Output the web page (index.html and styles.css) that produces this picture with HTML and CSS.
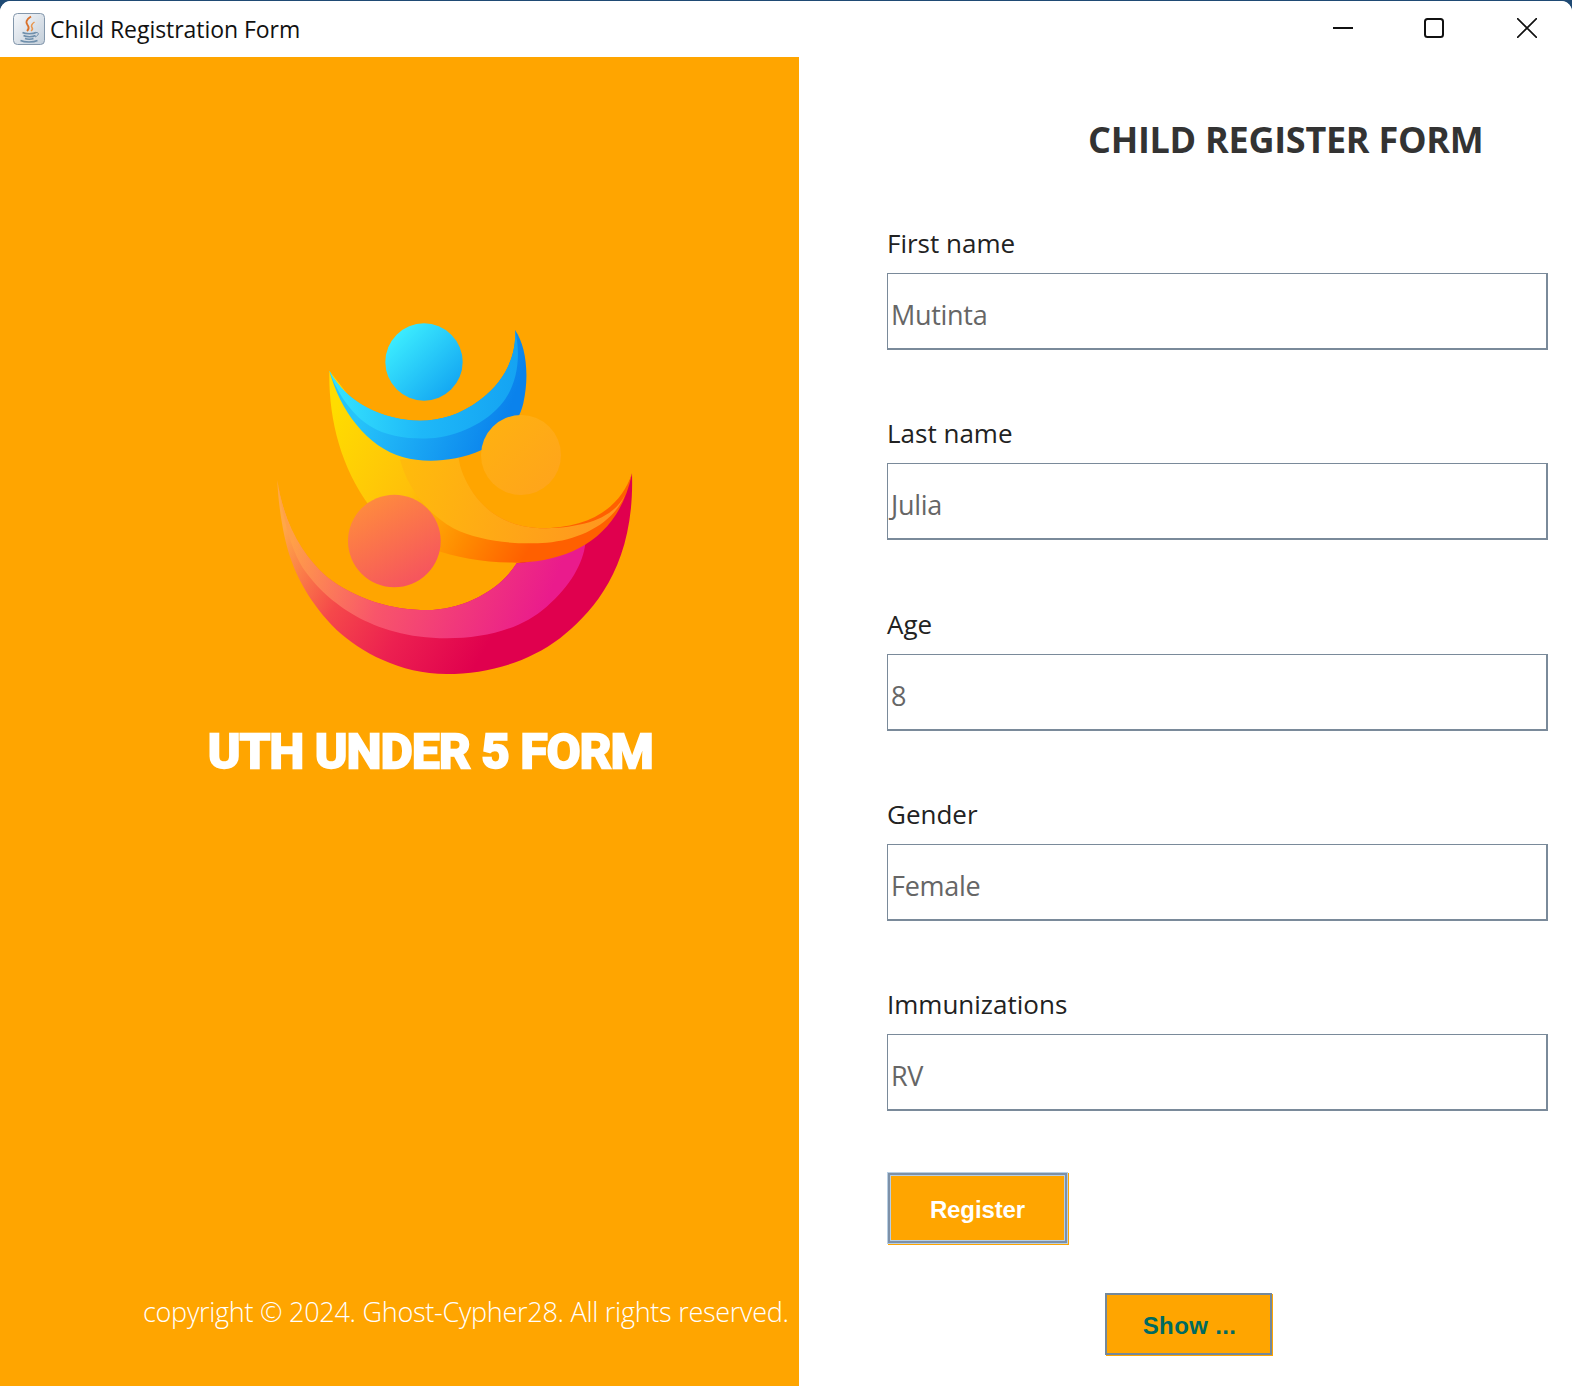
FILE: index.html
```html
<!DOCTYPE html>
<html lang="en">
<head>
<meta charset="utf-8">
<title>Child Registration Form</title>
<link rel="stylesheet" href="styles.css">
</head>
<body>
<div class="window">
  <header class="titlebar">
    <svg class="app-icon" viewBox="0 0 32 32" aria-hidden="true">
      <defs>
        <linearGradient id="iconbg" x1="0" y1="0" x2="1" y2="1">
          <stop offset="0" stop-color="#f6f8fb"/><stop offset="1" stop-color="#c3ced9"/>
        </linearGradient>
      </defs>
      <rect x="0.5" y="0.5" width="31" height="31" rx="4" fill="url(#iconbg)" stroke="#8397ab"/>
      <path d="M18 3.500c-5 3-5.500 6-3.500 8.500s1.500 4-.5 6" fill="none" stroke="#d9702a" stroke-width="1.900"/>
      <path d="M21.500 9c-3 2-3.500 4-2.500 5.500s.5 2.500-1 3.500" fill="none" stroke="#e8964f" stroke-width="1.500"/>
      <path d="M9.500 19.500c2.500 1.600 11 1.600 13.500 0M10.500 22.500c2.500 1.500 9.500 1.500 12 0M12 25.500c2 1 6.500 1 8.500 0" fill="none" stroke="#6f8fab" stroke-width="1.500"/>
      <path d="M23 19.500c3.500-.5 3 3-1 4.500" fill="none" stroke="#6f8fab" stroke-width="1"/>
      <path d="M7.500 27.500c4 2 13 2 17 0" fill="none" stroke="#6f8fab" stroke-width="1.400"/>
    </svg>
    <span class="window-title">Child Registration Form</span>
    <div class="controls">
      <svg class="ctl ctl-min" viewBox="0 0 20 20" aria-hidden="true"><path d="M0 10h20" stroke="#111" stroke-width="2"/></svg>
      <svg class="ctl ctl-max" viewBox="0 0 20 20" aria-hidden="true"><rect x="1" y="1" width="18" height="18" rx="2.500" fill="none" stroke="#111" stroke-width="2"/></svg>
      <svg class="ctl ctl-close" viewBox="0 0 20 20" aria-hidden="true"><path d="M0 0l20 20M20 0L0 20" stroke="#111" stroke-width="1.600"/></svg>
    </div>
  </header>
  <main class="content">
    <aside class="brand">
      <svg class="logo" viewBox="0 0 1200 1140" aria-label="Logo">
        <defs>
          <linearGradient id="gHead" x1="0" y1="0" x2="1" y2="1"><stop offset="0.1" stop-color="#3ef0ff"/><stop offset="0.9" stop-color="#12a4f2"/></linearGradient>
          <linearGradient id="gBlue" gradientUnits="userSpaceOnUse" x1="300" y1="300" x2="700" y2="440"><stop offset="0" stop-color="#26c4fa"/><stop offset="1" stop-color="#0a82ec"/></linearGradient>
          <linearGradient id="gBlueLite" gradientUnits="userSpaceOnUse" x1="220" y1="200" x2="780" y2="260"><stop offset="0" stop-color="#36e4fe"/><stop offset="0.5" stop-color="#1eb8f8"/><stop offset="1" stop-color="#14a2f2"/></linearGradient>
          <linearGradient id="gYellow" gradientUnits="userSpaceOnUse" x1="220" y1="300" x2="1000" y2="740"><stop offset="0" stop-color="#ffdc00"/><stop offset="0.35" stop-color="#ffc00a"/><stop offset="0.6" stop-color="#ff8a00"/><stop offset="0.8" stop-color="#ff6000"/></linearGradient>
          <linearGradient id="gYellowLite" gradientUnits="userSpaceOnUse" x1="430" y1="450" x2="1090" y2="640"><stop offset="0" stop-color="#ffbb0c"/><stop offset="1" stop-color="#ff9420"/></linearGradient>
          <linearGradient id="gPink" gradientUnits="userSpaceOnUse" x1="80" y1="640" x2="800" y2="1050"><stop offset="0" stop-color="#ffa848"/><stop offset="0.3" stop-color="#f5484a"/><stop offset="0.55" stop-color="#ec2050"/><stop offset="0.85" stop-color="#e0004e"/></linearGradient>
          <linearGradient id="gPinkLite" gradientUnits="userSpaceOnUse" x1="100" y1="680" x2="830" y2="960"><stop offset="0" stop-color="#ffa048"/><stop offset="0.4" stop-color="#f8556a"/><stop offset="1" stop-color="#ea1b8c"/></linearGradient>
          <linearGradient id="gRed" x1="0.2" y1="0" x2="0.8" y2="1"><stop offset="0" stop-color="#ff8e3c"/><stop offset="1" stop-color="#f55060"/></linearGradient>
          <linearGradient id="gGold" x1="0" y1="0" x2="1" y2="1"><stop offset="0" stop-color="#ffb210"/><stop offset="1" stop-color="#ffa31c"/></linearGradient>
        </defs>
        <path fill="url(#gPink)" d="M52 510C55 590 70 680 90 740 C110 800 150 880 230 960 C300 1025 420 1092 560 1092 C680 1092 800 1060 900 985 C1000 905 1125 770 1116 490 C1090 590 1000 690 770 760 C720 840 610 900 500 900 C400 900 290 870 200 800 C130 740 70 640 52 510Z"/>
        <path fill="url(#gPinkLite)" d="M52 510C70 640 100 740 140 790 C200 870 330 985 560 985 C670 985 780 960 860 890 C930 830 970 760 976 700 C900 735 830 755 770 760 C720 840 610 900 500 900 C400 900 290 870 200 800 C130 740 70 640 52 510Z"/>
        <path fill="url(#gYellow)" d="M208 182C205 320 240 470 330 590 C430 710 600 760 780 758 C950 750 1080 670 1116 490 C1080 600 980 655 840 655 C760 652 690 620 640 550 C615 510 600 480 595 440 L400 430Z"/>
        <path fill="url(#gYellowLite)" d="M420 448C440 530 500 610 580 655 C660 695 770 705 860 698 C960 690 1060 640 1095 555 C1060 625 970 655 840 655 C760 652 690 620 640 550 C615 510 600 480 595 440Z"/>
        <path fill="url(#gBlue)" d="M208 182C240 300 320 410 430 442 C490 458 580 458 665 420 C730 390 775 345 790 280 C808 200 800 110 765 60 C770 130 740 210 660 270 C600 315 540 332 480 332 C370 330 260 280 208 182Z"/>
        <path fill="url(#gBlueLite)" d="M208 182C228 240 270 310 330 348 C380 380 450 388 510 385 C590 380 680 340 730 275 C770 225 785 140 765 60 C770 130 740 210 660 270 C600 315 540 332 480 332 C370 330 260 280 208 182Z"/>
        <circle cx="492" cy="156" r="116" fill="url(#gHead)"/>
        <circle cx="783" cy="435" r="120" fill="url(#gGold)"/>
        <circle cx="403" cy="693" r="139" fill="url(#gRed)"/>
      </svg>
      <h2 class="brand-name">UTH UNDER 5 FORM</h2>
      <p class="copyright">copyright © 2024. Ghost-Cypher28. All rights reserved.</p>
    </aside>
    <section class="form-panel">
      <h1 class="form-title">CHILD REGISTER FORM</h1>
      <div class="field"><span class="label">First name</span><div class="input">Mutinta</div></div>
      <div class="field"><span class="label">Last name</span><div class="input">Julia</div></div>
      <div class="field"><span class="label">Age</span><div class="input">8</div></div>
      <div class="field"><span class="label">Gender</span><div class="input">Female</div></div>
      <div class="field"><span class="label">Immunizations</span><div class="input">RV</div></div>
      <button class="btn btn-register" type="button">Register</button>
      <button class="btn btn-show" type="button">Show ...</button>
    </section>
  </main>
</div>
</body>
</html>
```
FILE: styles.css
```css
* { box-sizing: border-box; }
html, body { margin: 0; height: 100%; }
body { background: #1f4a74; overflow: hidden; }

.window {
  height: 1386px;
  width: 1572px;
  margin-top: 1px;
  background: #fff;
  border-radius: 11px 11px 0 0;
  overflow: hidden;
  display: flex;
  flex-direction: column;
  font-family: "Open Sans", "Noto Sans", sans-serif;
}

.titlebar {
  height: 56px;
  flex: none;
  display: flex;
  align-items: center;
  padding-left: 13px;
  background: #fff;
}
.app-icon { width: 32px; height: 32px; flex: none; }
.window-title { margin-left: 5px; font-size: 23px; color: #111; margin-top: -1px; letter-spacing: -0.05px; }
.controls { margin-left: auto; display: flex; align-items: center; padding-right: 35px; height: 56px; margin-top: -3px; }
.ctl { display: block; width: 20px; height: 20px; }
.ctl-min { margin-right: 71px; }
.ctl-max { margin-right: 73px; }

.content { flex: 1; display: flex; min-height: 0; }

.brand {
  width: 799px;
  flex: none;
  background: #ffa500;
  display: flex;
  flex-direction: column;
  align-items: flex-start;
  color: #fff;
}
.logo { width: 400px; height: 380px; margin: 253px 0 0 260px; display: block; flex: none; }
.brand-name {
  margin: 32px 0 0 208px;
  font-family: "Roboto", sans-serif;
  font-weight: 700;
  font-size: 49px;
  line-height: 60px;
  letter-spacing: -0.6px;
  white-space: nowrap;
  -webkit-text-stroke: 2.5px #fff;
}
.copyright {
  margin: 510px 0 0 143px;
  font-weight: 300;
  font-size: 27px;
  line-height: 40px;
  letter-spacing: -0.27px;
  white-space: nowrap;
}

.form-panel {
  flex: 1;
  display: flex;
  flex-direction: column;
  align-items: flex-start;
  padding: 0 24px 0 88px;
  min-width: 0;
}
.form-title {
  margin: 60px 0 0 201px;
  font-size: 36px;
  line-height: 46px;
  font-weight: 700;
  letter-spacing: -0.28px;
  color: #333;
  white-space: nowrap;
}
.field { width: 100%; display: flex; flex-direction: column; margin-top: 65.25px; }
.form-title + .field { margin-top: 62px; }
.label { font-size: 26px; line-height: 36px; color: #222; margin-bottom: 12px; }
.input {
  height: 77px;
  border-style: solid;
  border-color: #7a8a9a;
  border-width: 1px 2px 2px 1px;
  padding: 19px 0 0 3px;
  font-size: 27px;
  line-height: 44px;
  letter-spacing: -0.3px;
  color: #666;
}

.btn {
  background: #ffa500;
  font-family: "Liberation Sans", Arial, sans-serif;
  font-weight: 700;
  font-size: 24px;
  padding: 0;
  display: block;
}
.btn-register {
  width: 181px;
  height: 72px;
  margin-top: 61px;
  padding-top: 3px;
  color: #fff;
  letter-spacing: -0.1px;
  border: 1px solid #b8cfe4;
  box-shadow: inset 0 0 0 2px #7d91a8, inset 0 0 0 3px #b8cfe4, 1px 1px 0 #ffa500;
}
.btn-show {
  width: 167px;
  height: 62px;
  margin: 49px 0 0 218px;
  padding: 4px 0 0 2px;
  color: #006a60;
  letter-spacing: 0.35px;
  border: 2px solid #74889a;
  box-shadow: 1px 1px 0 #ffa500;
}
```
